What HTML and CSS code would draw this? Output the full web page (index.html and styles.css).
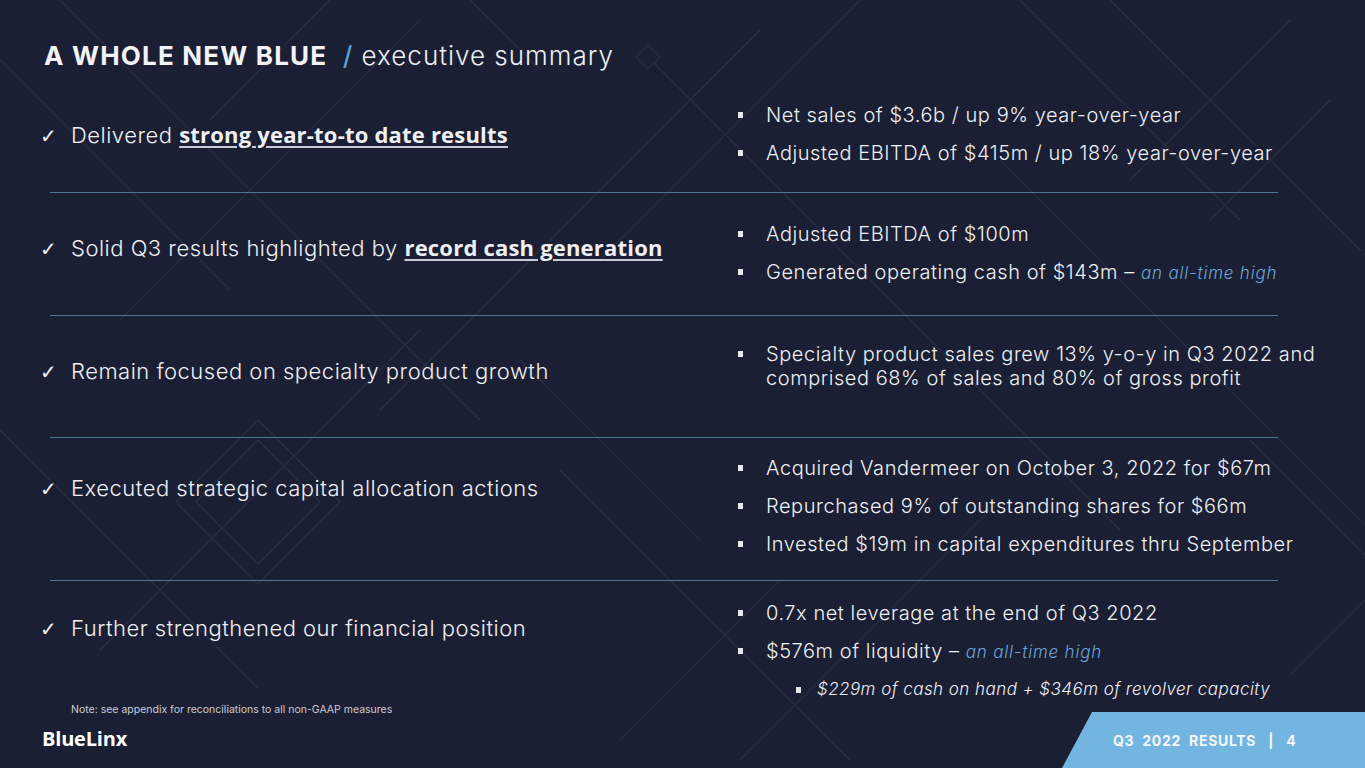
FILE: index.html
```html
<!DOCTYPE html>
<html lang="en">
<head>
<meta charset="utf-8">
<title>A Whole New Blue / executive summary</title>
<link rel="stylesheet" href="styles.css">
</head>
<body>
<div class="slide">
  <svg class="bg" width="1365" height="768" viewBox="0 0 1365 768" aria-hidden="true">
    <g fill="none" stroke="#282e44" stroke-width="1.2">
      <line x1="60" y1="0" x2="480" y2="420"/>
      <line x1="0" y1="60" x2="230" y2="290"/>
      <line x1="330" y1="0" x2="210" y2="120"/>
      <line x1="420" y1="20" x2="120" y2="320"/>
      <line x1="470" y1="0" x2="540" y2="70"/>
      <path d="M648 45 L660 57 L648 69 L636 57 Z"/>
      <line x1="654" y1="63" x2="1120" y2="530"/>
      <line x1="760" y1="30" x2="380" y2="410"/>
      <line x1="860" y1="0" x2="600" y2="260"/>
      <line x1="1110" y1="0" x2="1365" y2="255"/>
      <line x1="1290" y1="20" x2="1130" y2="180"/>
      <line x1="1330" y1="100" x2="1210" y2="220"/>
      <line x1="1000" y1="160" x2="1365" y2="525"/>
      <line x1="1020" y1="0" x2="1240" y2="220"/>
      <path d="M258 420 L340 502 L258 584 L176 502 Z"/>
      <path d="M258 440 L320 502 L258 564 L196 502 Z"/>
      <line x1="0" y1="430" x2="258" y2="688"/>
      <line x1="420" y1="330" x2="100" y2="650"/>
      <line x1="520" y1="360" x2="700" y2="540"/>
      <line x1="560" y1="470" x2="850" y2="760"/>
      <line x1="780" y1="580" x2="620" y2="740"/>
      <line x1="1000" y1="500" x2="740" y2="760"/>
      <line x1="1250" y1="440" x2="1365" y2="555"/>
      <line x1="1365" y1="600" x2="1290" y2="675"/>
    </g>
  </svg>

  <header class="title">
    <span class="title-strong">A WHOLE NEW BLUE</span>
    <span class="title-slash">/</span>
    <span class="title-light">executive summary</span>
  </header>

  <main class="rows">
    <section class="row r1">
      <p class="claim"><span class="check">✓</span>Delivered <b class="key">strong year-to-to date results</b></p>
      <ul class="facts">
        <li>Net sales of $3.6b / up 9% year-over-year</li>
        <li>Adjusted EBITDA of $415m / up 18% year-over-year</li>
      </ul>
    </section>
    <div class="divider"></div>
    <section class="row r2">
      <p class="claim"><span class="check">✓</span>Solid Q3 results highlighted by <b class="key">record cash generation</b></p>
      <ul class="facts">
        <li>Adjusted EBITDA of $100m</li>
        <li>Generated operating cash of $143m – <em class="hi">an all-time high</em></li>
      </ul>
    </section>
    <div class="divider"></div>
    <section class="row r3">
      <p class="claim"><span class="check">✓</span>Remain focused on specialty product growth</p>
      <ul class="facts">
        <li>Specialty product sales grew 13% y-o-y in Q3 2022 and comprised 68% of sales and 80% of gross profit</li>
      </ul>
    </section>
    <div class="divider"></div>
    <section class="row r4">
      <p class="claim"><span class="check">✓</span>Executed strategic capital allocation actions</p>
      <ul class="facts">
        <li>Acquired Vandermeer on October 3, 2022 for $67m</li>
        <li>Repurchased 9% of outstanding shares for $66m</li>
        <li>Invested $19m in capital expenditures thru September</li>
      </ul>
    </section>
    <div class="divider"></div>
    <section class="row r5">
      <p class="claim"><span class="check">✓</span>Further strengthened our financial position</p>
      <ul class="facts">
        <li>0.7x net leverage at the end of Q3 2022</li>
        <li>$576m of liquidity – <em class="hi">an all-time high</em>
          <ul class="sub">
            <li>$229m of cash on hand + $346m of revolver capacity</li>
          </ul>
        </li>
      </ul>
    </section>
  </main>

  <footer class="footer">
    <div class="foot-left">
      <p class="note">Note: see appendix for reconciliations to all non-GAAP measures</p>
      <div class="logo">BlueLinx</div>
    </div>
    <div class="badge">Q3&nbsp;&nbsp;2022&nbsp;&nbsp;RESULTS&nbsp;&nbsp;&nbsp;|&nbsp;&nbsp;&nbsp;4</div>
  </footer>
</div>
</body>
</html>
```

FILE: styles.css
```css
* { box-sizing: border-box; }
html, body { margin: 0; padding: 0; }
body {
  background: #1b1f33;
  font-family: "Inter", "Open Sans", sans-serif;
  color: #eef0f5;
}
.slide {
  position: relative;
  width: 1365px;
  height: 768px;
  overflow: hidden;
  background: #1b1f33;
  display: flex;
  flex-direction: column;
}
.bg {
  position: absolute;
  left: 0;
  top: 0;
  z-index: 0;
}
.title, .rows, .footer { position: relative; z-index: 1; }

.title {
  height: 96px;
  padding: 42px 0 0 44px;
  font-size: 26px;
  line-height: 28px;
  white-space: nowrap;
}
.title-strong { font-weight: 700; color: #f2f3f7; letter-spacing: 1.2px; }
.title-slash { color: #5c9fd6; font-weight: 500; margin: 0 2px 0 8px; }
.title-light { font-weight: 300; color: #eef0f5; letter-spacing: 1px; }

.rows { display: flex; flex-direction: column; }
.row {
  display: grid;
  grid-template-columns: 697px 1fr;
  padding-left: 40px;
  align-items: start;
}
.divider {
  height: 1px;
  margin-left: 50px;
  width: 1228px;
  background: #4f7394;
}
.claim {
  margin: 0;
  font-size: 22px;
  line-height: 24px;
  font-weight: 300;
  letter-spacing: 0.5px;
  white-space: nowrap;
}
.check {
  display: inline-block;
  width: 31px;
  font-family: "DejaVu Sans", sans-serif;
  font-size: 20px;
  font-weight: 400;
  letter-spacing: 0;
}
.key {
  font-family: "Open Sans", sans-serif;
  font-weight: 700;
  letter-spacing: 0.2px;
  text-decoration: underline;
  text-decoration-thickness: 2px;
  text-underline-offset: 3px;
  text-decoration-color: #c9ccd6;
}
.facts {
  list-style: none;
  margin: 0;
  padding: 0;
  font-size: 20px;
  line-height: 24px;
  font-weight: 300;
  letter-spacing: 0.55px;
}
.facts > li {
  position: relative;
  padding-left: 29px;
  margin-bottom: 14px;
}
.facts > li::before {
  content: "";
  position: absolute;
  left: 1px;
  top: 9px;
  width: 5px;
  height: 6px;
  background: #e6e8ee;
}
.hi {
  color: #6aa6d8;
  font-size: 17px;
  font-weight: 300;
  letter-spacing: 0.8px;
}
.sub {
  list-style: none;
  margin: 14px 0 0 0;
  padding: 0 0 0 21px;
}
.sub li {
  position: relative;
  padding-left: 30px;
  font-size: 17px;
  line-height: 22px;
  font-style: italic;
  letter-spacing: 0.45px;
}
.sub li::before {
  content: "";
  position: absolute;
  left: 9px;
  top: 9px;
  width: 5px;
  height: 6px;
  background: #e6e8ee;
}

.r1 { height: 96px; }
.r1 .claim { margin-top: 26px; }
.r1 .facts { margin-top: 7px; }
.r2 { height: 122px; }
.r2 .claim { margin-top: 42px; }
.r2 .facts { margin-top: 29px; }
.r3 { height: 121px; }
.r3 .claim { margin-top: 43px; }
.r3 .facts { margin-top: 26px; }
.r4 { height: 142px; }
.r4 .claim { margin-top: 38px; }
.r4 .facts { margin-top: 18px; }
.r5 { height: 119px; }
.r5 .claim { margin-top: 35px; }
.r5 .facts { margin-top: 20px; }
.r3 .facts > li { max-width: 590px; }

.footer {
  flex: 1;
  display: flex;
  justify-content: space-between;
  align-items: flex-end;
}
.foot-left { align-self: flex-start; padding-left: 42px; }
.note {
  margin: 3px 0 0 29px;
  font-size: 10.5px;
  line-height: 14px;
  color: #c9ccd6;
  font-weight: 400;
}
.logo {
  margin-top: 10px;
  font-family: "Open Sans", sans-serif;
  font-weight: 700;
  font-size: 20px;
  line-height: 24px;
  color: #ffffff;
  letter-spacing: -0.2px;
}
.badge {
  width: 303px;
  height: 56px;
  background: #72b5e0;
  clip-path: polygon(30px 0, 100% 0, 100% 100%, 0 100%);
  padding-left: 51px;
  display: flex;
  align-items: center;
  color: #f4f8fc;
  font-weight: 700;
  font-size: 14px;
  letter-spacing: 0.7px;
  white-space: nowrap;
}
```
